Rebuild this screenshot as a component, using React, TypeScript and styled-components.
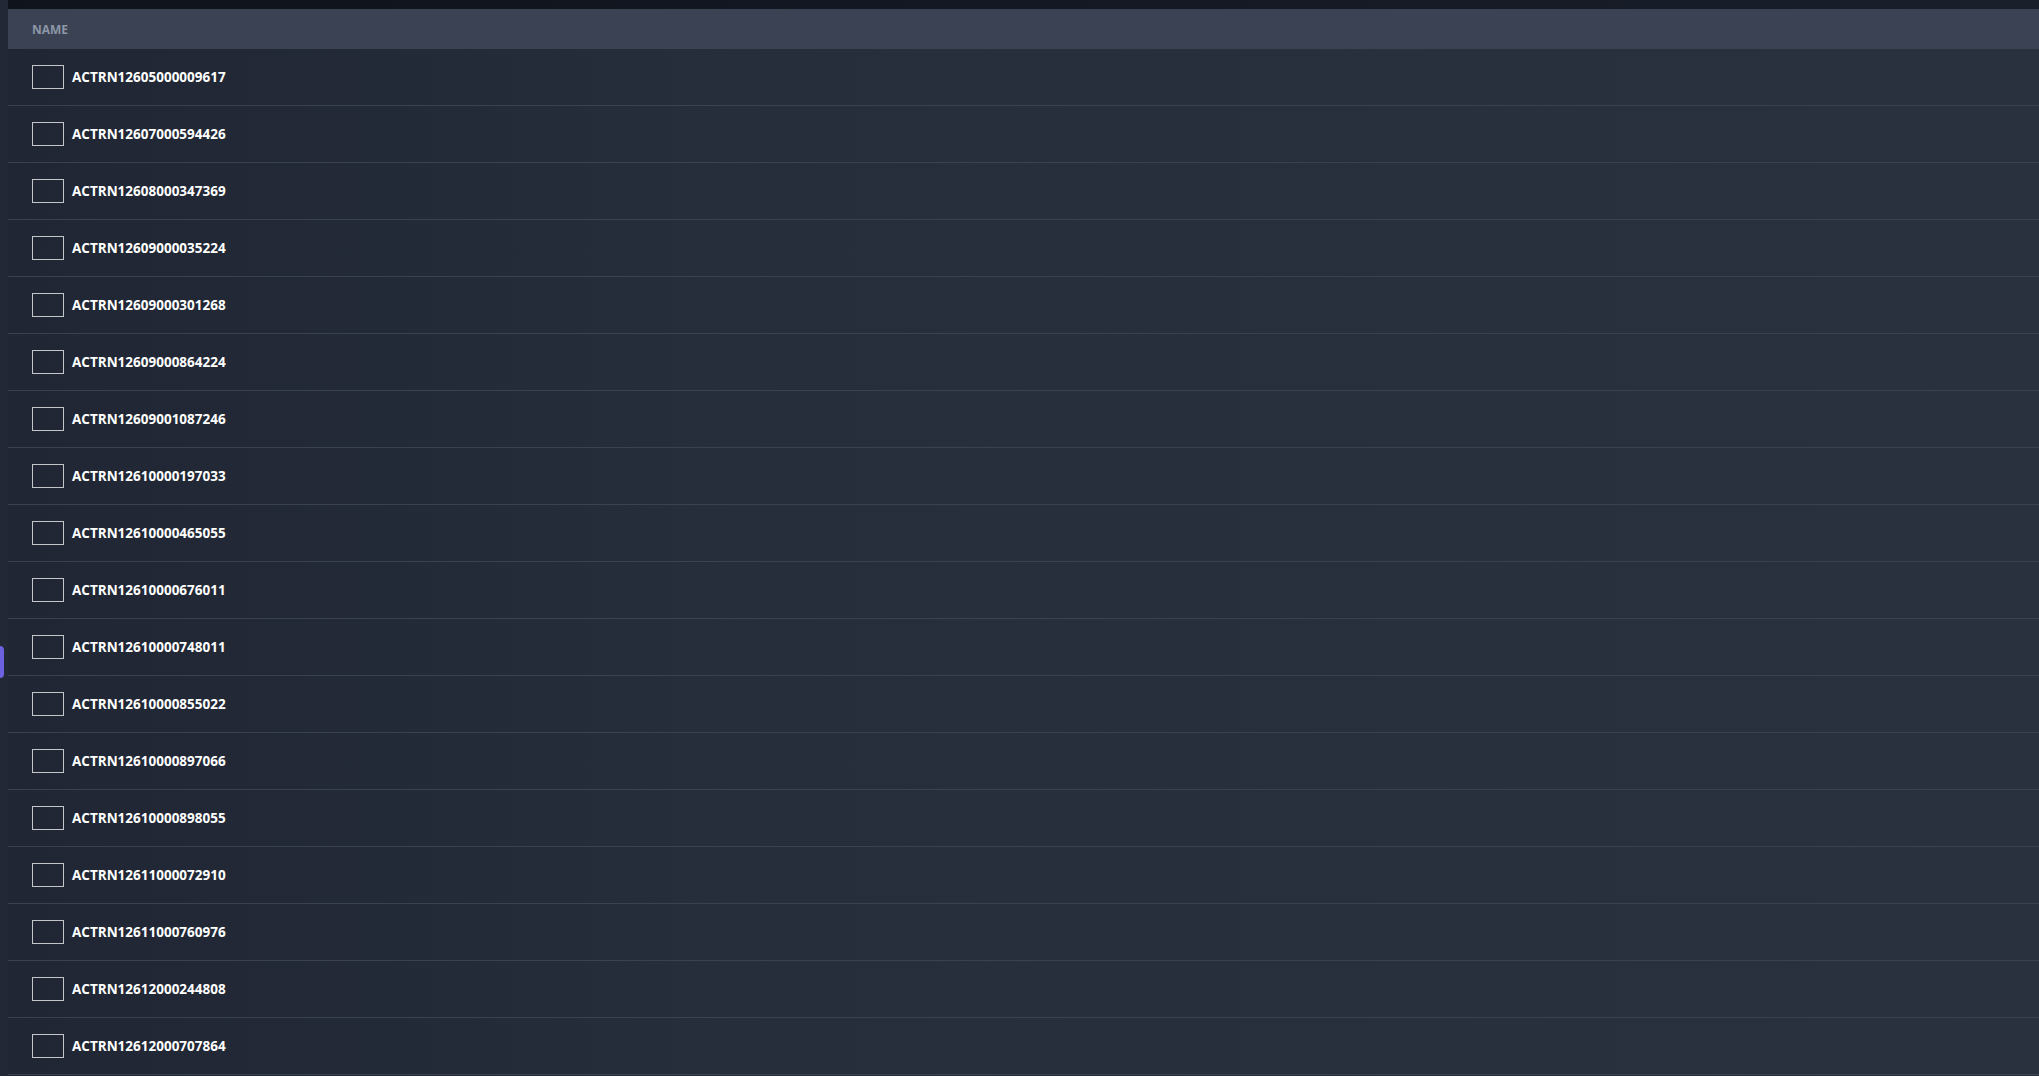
import * as React from 'react';
import styled, { createGlobalStyle } from 'styled-components';

const trialIds = [
  'ACTRN12605000009617',
  'ACTRN12607000594426',
  'ACTRN12608000347369',
  'ACTRN12609000035224',
  'ACTRN12609000301268',
  'ACTRN12609000864224',
  'ACTRN12609001087246',
  'ACTRN12610000197033',
  'ACTRN12610000465055',
  'ACTRN12610000676011',
  'ACTRN12610000748011',
  'ACTRN12610000855022',
  'ACTRN12610000897066',
  'ACTRN12610000898055',
  'ACTRN12611000072910',
  'ACTRN12611000760976',
  'ACTRN12612000244808',
  'ACTRN12612000707864',
];

const GlobalStyle = createGlobalStyle`
  html, body {
    margin: 0;
    padding: 0;
    height: 100%;
    overflow: hidden;
    background: #222835;
    font-family: 'Open Sans', 'Noto Sans', sans-serif;
  }
`;

const Shell = styled.div`
  display: flex;
  height: 100vh;
`;

const Rail = styled.div`
  position: relative;
  flex: 0 0 8px;
  background: #222835;
`;

const RailHandle = styled.div`
  position: absolute;
  left: 0;
  top: 646px;
  width: 4px;
  height: 32px;
  border-radius: 0 4px 4px 0;
  background: #6c62e0;
`;

const Main = styled.div`
  flex: 1;
  display: flex;
  flex-direction: column;
  min-width: 0;
  background: linear-gradient(90deg, #202633 0%, #262d3b 35%, #29313f 100%);
`;

const TopBar = styled.div`
  height: 9px;
  background: linear-gradient(90deg, #0f131b 0%, #141924 60%, #1a202b 100%);
`;

const HeaderRow = styled.div`
  display: flex;
  align-items: center;
  height: 40px;
  padding-left: 24px;
  background: #3a4253;
  color: #8d96a6;
  font-size: 12px;
  font-weight: 700;
  text-transform: uppercase;
`;

const Row = styled.div`
  display: flex;
  align-items: center;
  gap: 8px;
  height: 56px;
  padding-left: 24px;
  border-bottom: 1px solid #394152;
`;

const CheckBox = styled.span`
  box-sizing: border-box;
  width: 32px;
  height: 24px;
  border: 1px solid #c4c6ca;
  background: transparent;
`;

const TrialName = styled.span`
  color: #ffffff;
  font-size: 13.5px;
  font-weight: 700;
`;

export default function App() {
  return (
    <Shell>
      <GlobalStyle />
      <Rail>
        <RailHandle />
      </Rail>
      <Main>
        <TopBar />
        <HeaderRow>Name</HeaderRow>
        {trialIds.map((id) => (
          <Row key={id}>
            <CheckBox />
            <TrialName>{id}</TrialName>
          </Row>
        ))}
      </Main>
    </Shell>
  );
}
